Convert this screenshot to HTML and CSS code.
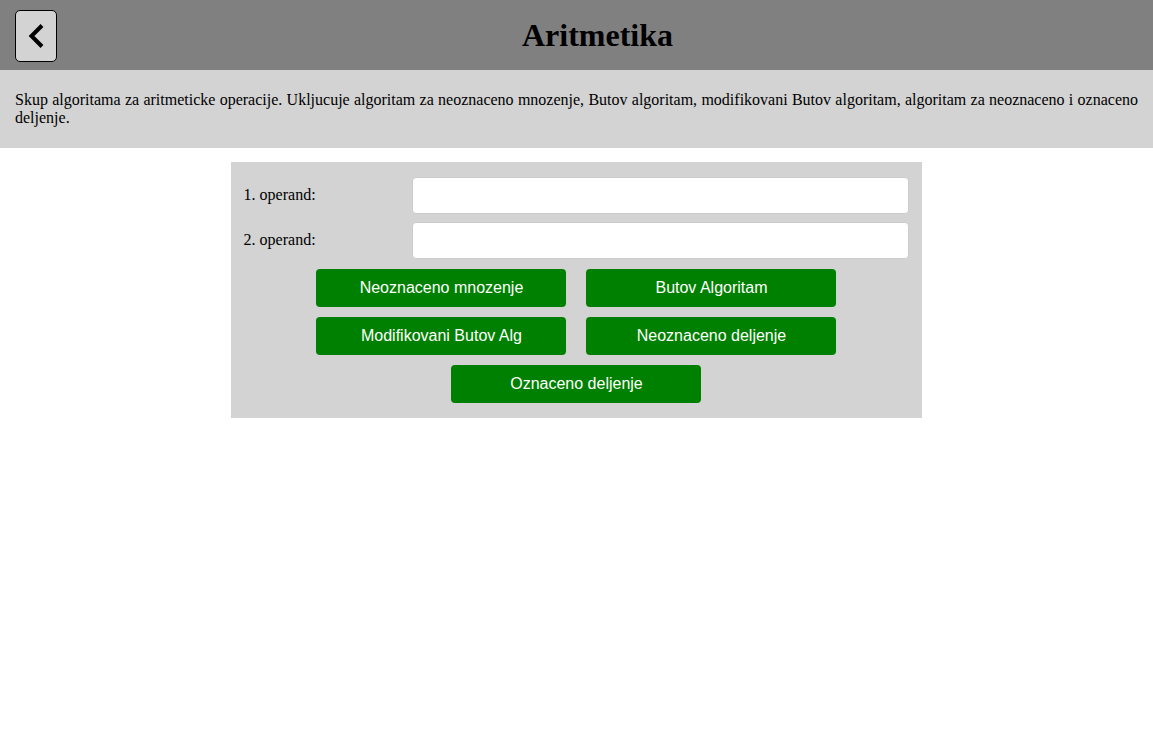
FILE: index.html
```
<!DOCTYPE html>
<html lang="sr-Latn">
<head>
<meta charset="utf-8">
<title>Aritmetika</title>
<link rel="stylesheet" href="styles.css">
</head>
<body>
<header class="header">
  <button class="back" type="button" aria-label="Nazad">
    <svg class="back-icon" viewBox="0 0 20 30" aria-hidden="true"><path d="M16 4.5 5.5 15 16 25.5" fill="none" stroke="#000" stroke-width="4"/></svg>
  </button>
  <h1 class="title">Aritmetika</h1>
</header>
<p class="description">Skup algoritama za aritmeticke operacije. Ukljucuje algoritam za neoznaceno mnozenje, Butov algoritam, modifikovani Butov algoritam, algoritam za neoznaceno i oznaceno deljenje.</p>
<form class="panel">
  <div class="fields">
    <label class="label" for="operand1">1. operand:</label>
    <input class="operand" id="operand1" type="text">
    <label class="label" for="operand2">2. operand:</label>
    <input class="operand" id="operand2" type="text">
  </div>
  <div class="actions">
    <button class="action" type="button">Neoznaceno mnozenje</button>
    <button class="action" type="button">Butov Algoritam</button>
    <button class="action" type="button">Modifikovani Butov Alg</button>
    <button class="action" type="button">Neoznaceno deljenje</button>
    <button class="action" type="button">Oznaceno deljenje</button>
  </div>
</form>
</body>
</html>
```

FILE: styles.css
```
* {
  box-sizing: border-box;
}

body {
  margin: 0;
  font: 16px/18px "Liberation Serif", serif;
  color: #000;
  background: #fff;
}

.header {
  display: flex;
  align-items: center;
  padding: 10px 15px 8px;
  background: gray;
}

.back {
  display: flex;
  align-items: center;
  justify-content: center;
  width: 42px;
  height: 52px;
  padding: 0;
  border: 1px solid #000;
  border-radius: 5px;
  background: lightgray;
  cursor: pointer;
}

.back-icon {
  width: 20px;
  height: 30px;
}

.title {
  flex: 1;
  margin: 0;
  padding-bottom: 2px;
  font-size: 32px;
  line-height: 36px;
  text-align: center;
}

.description {
  margin: 0;
  padding: 21px 15px;
  text-align: justify;
  background: lightgray;
}

.panel {
  width: 60%;
  margin: 14px auto;
  padding: 15px 13px;
  background: lightgray;
}

.fields {
  display: grid;
  grid-template-columns: 1fr 3fr;
  align-items: center;
  gap: 8px 2px;
}

.label {
  padding-bottom: 2px;
}

.operand {
  width: 100%;
  height: 37px;
  padding: 8px;
  border: 1px solid #ccc;
  border-radius: 4px;
  font: inherit;
  background: #fff;
}

.actions {
  display: flex;
  flex-wrap: wrap;
  justify-content: center;
  gap: 10px 20px;
  margin: 10px 60px 0;
}

.action {
  width: 250px;
  padding: 10px;
  border: 0;
  border-radius: 4px;
  font: 16px/18px Arial, "Liberation Sans", sans-serif;
  color: #fff;
  background: green;
  cursor: pointer;
}
```
